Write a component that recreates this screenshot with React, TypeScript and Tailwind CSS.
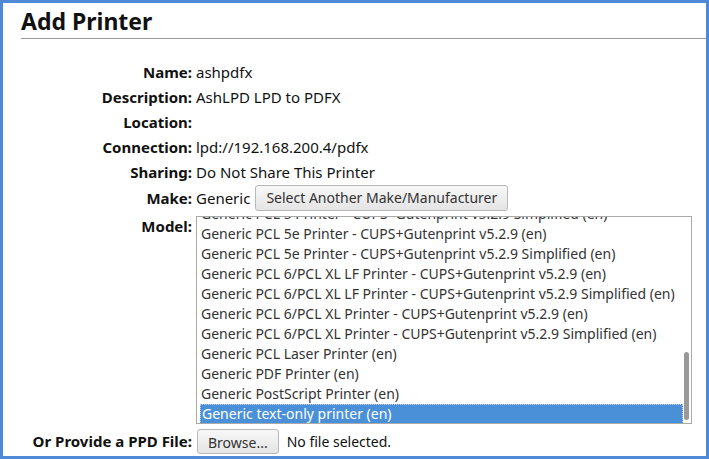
const items = [
  'Generic PCL 5 Printer - CUPS+Gutenprint v5.2.9 Simplified (en)',
  'Generic PCL 5e Printer - CUPS+Gutenprint v5.2.9 (en)',
  'Generic PCL 5e Printer - CUPS+Gutenprint v5.2.9 Simplified (en)',
  'Generic PCL 6/PCL XL LF Printer - CUPS+Gutenprint v5.2.9 (en)',
  'Generic PCL 6/PCL XL LF Printer - CUPS+Gutenprint v5.2.9 Simplified (en)',
  'Generic PCL 6/PCL XL Printer - CUPS+Gutenprint v5.2.9 (en)',
  'Generic PCL 6/PCL XL Printer - CUPS+Gutenprint v5.2.9 Simplified (en)',
  'Generic PCL Laser Printer (en)',
  'Generic PDF Printer (en)',
  'Generic PostScript Printer (en)',
  'Generic text-only printer (en)',
];

function Row({ label, children }: { label: string; children?: React.ReactNode }) {
  return (
    <div className="flex items-baseline">
      <div className="w-[171px] shrink-0 text-right font-bold">{label}:</div>
      <div className="pl-[4px]">{children}</div>
    </div>
  );
}

export default function App() {
  return (
    <div className="h-[459px] w-[709px] overflow-hidden border-[3px] border-[#4e8ad7] bg-white text-[15px] leading-[25px] text-[#111] [font-family:'Noto_Sans',sans-serif]">
      <div className="pl-[18px]">
        <h1 className="pt-[4px] text-[23px] font-bold leading-[28px] [font-family:'Liberation_Sans',sans-serif]">Add Printer</h1>
        <div className="mt-[3px] h-px bg-[#999]" />
        <div className="mt-[21px] flex flex-col">
          <Row label="Name">ashpdfx</Row>
          <Row label="Description">AshLPD LPD to PDFX</Row>
          <Row label="Location" />
          <Row label="Connection">lpd://192.168.200.4/pdfx</Row>
          <Row label="Sharing">Do Not Share This Printer</Row>
          <Row label="Make">
            <span className="inline-flex items-center gap-[5px] align-baseline">
              Generic
              <button className="h-[26px] rounded-[3px] border border-[#b8b8b8] bg-gradient-to-b from-[#f8f8f8] to-[#e4e4e4] px-[10px] text-[14px] leading-[24px] text-[#333]">
                Select Another Make/Manufacturer
              </button>
            </span>
          </Row>
          <div className="mt-[5px] flex items-start">
            <div className="w-[171px] shrink-0 text-right font-bold leading-[20px]">Model:</div>
            <div className="relative ml-[4px] h-[208px] w-[496px] overflow-hidden border border-[#aaa] text-[14px] leading-[20px] text-[#333]">
              <div className="-mt-[13px] pl-[3px]">
                {items.map((t, i) => (
                  <div
                    key={i}
                    className={`h-[20px] whitespace-nowrap pl-[1px] ${i === items.length - 1 ? 'mr-[8px] border border-dotted border-[#ccc] bg-[#4a90d9] leading-[18px] text-white' : ''}`}
                  >
                    {t}
                  </div>
                ))}
              </div>
              <div className="absolute right-[2px] top-[135px] h-[68px] w-[5px] rounded-full bg-[#999]" />
            </div>
          </div>
          <div className="mt-[5px] flex items-center">
            <div className="w-[171px] shrink-0 text-right font-bold">Or Provide a PPD File:</div>
            <button className="ml-[5px] h-[25px] rounded-[3px] border border-[#b8b8b8] bg-gradient-to-b from-[#f8f8f8] to-[#e4e4e4] px-[10px] text-[14px] text-[#333]">
              Browse...
            </button>
            <span className="ml-[8px] text-[14px] text-[#111]">No file selected.</span>
          </div>
        </div>
      </div>
    </div>
  );
}
